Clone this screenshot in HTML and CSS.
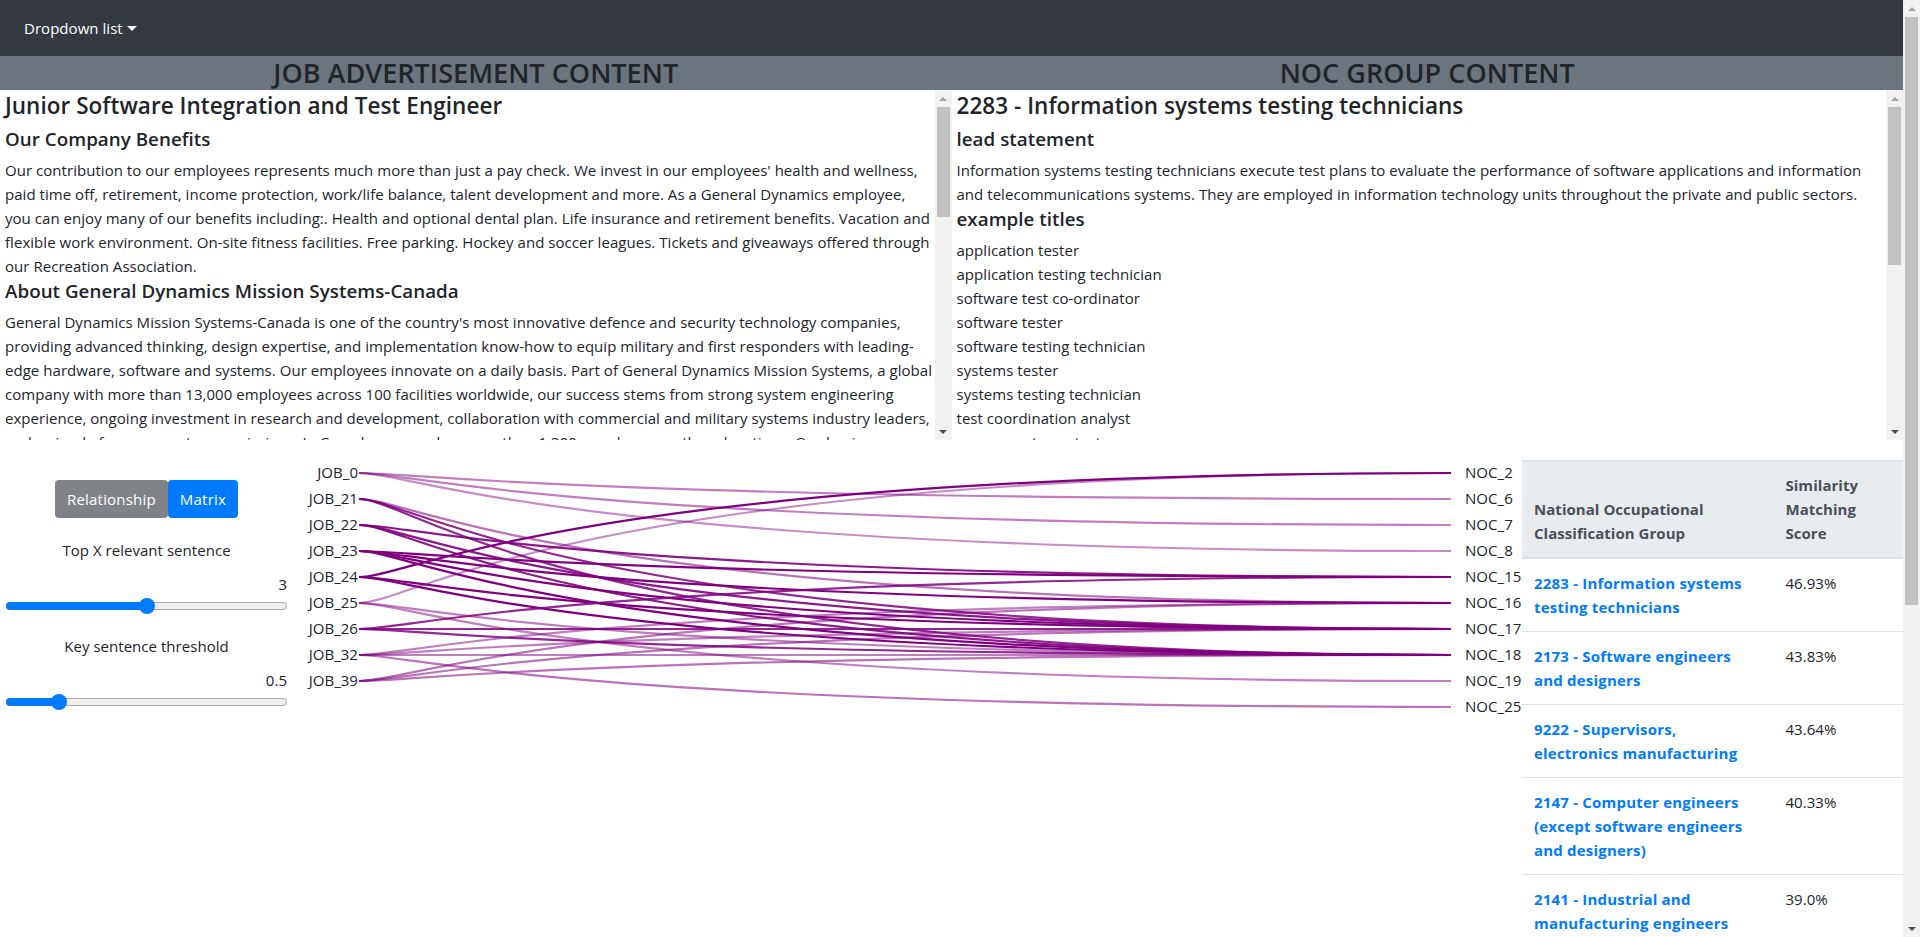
FILE: index.html
```html
<!DOCTYPE html>
<html lang="en">
<head>
<meta charset="UTF-8" />
<title>Job advertisement matching</title>
<link rel="stylesheet" href="styles.css">
</head>
<body>

<div class="page">
  <nav class="navbar">
    <a class="nav-link">Dropdown list<span class="caret"></span></a>
  </nav>

  <div class="heading-row">
    <h3>JOB ADVERTISEMENT CONTENT</h3>
    <h3>NOC GROUP CONTENT</h3>
  </div>

  <div class="panels">
    <div class="panel">
      <div class="panel-body">
        <h4>Junior Software Integration and Test Engineer</h4>
        <h5>Our Company Benefits</h5>
        <p>Our contribution to our employees represents much more than just a pay check. We invest in our employees' health and wellness, paid time off, retirement, income protection, work/life balance, talent development and more. As a General Dynamics employee, you can enjoy many of our benefits including:. Health and optional dental plan. Life insurance and retirement benefits. Vacation and flexible work environment. On-site fitness facilities. Free parking. Hockey and soccer leagues. Tickets and giveaways offered through our Recreation Association.</p>
        <h5>About General Dynamics Mission Systems-Canada</h5>
        <p>General Dynamics Mission Systems-Canada is one of the country's most innovative defence and security technology companies, providing advanced thinking, design expertise, and implementation know-how to equip military and first responders with leading-edge hardware, software and systems. Our employees innovate on a daily basis. Part of General Dynamics Mission Systems, a global company with more than 13,000 employees across 100 facilities worldwide, our success stems from strong system engineering experience, ongoing investment in research and development, collaboration with commercial and military systems industry leaders, and a simple focus on customer missions. In Canada, we employ more than 1,300 people across three locations. Our business</p>
      </div>
      <div class="scrollbar">
        <div class="arrow"><span class="tri-up"></span></div>
        <div class="thumb thumb-job"></div>
        <div class="arrow arrow-down"><span class="tri-down"></span></div>
      </div>
    </div>
    <div class="panel">
      <div class="panel-body">
        <h4>2283 - Information systems testing technicians</h4>
        <h5>lead statement</h5>
        <p>Information systems testing technicians execute test plans to evaluate the performance of software applications and information and telecommunications systems. They are employed in information technology units throughout the private and public sectors.</p>
        <h5>example titles</h5>
        <p>application tester</p>
        <p>application testing technician</p>
        <p>software test co-ordinator</p>
        <p>software tester</p>
        <p>software testing technician</p>
        <p>systems tester</p>
        <p>systems testing technician</p>
        <p>test coordination analyst</p>
        <p>user acceptance tester</p>
      </div>
      <div class="scrollbar">
        <div class="arrow"><span class="tri-up"></span></div>
        <div class="thumb thumb-noc"></div>
        <div class="arrow arrow-down"><span class="tri-down"></span></div>
      </div>
    </div>
  </div>

  <div class="main">
    <div class="controls">
      <div class="btn-row">
        <button class="btn btn-gray">Relationship</button>
        <button class="btn btn-blue">Matrix</button>
      </div>

      <div class="ctl-label">Top X relevant sentence</div>
      <div class="ctl-value">3</div>
      <div class="slider">
        <div class="slider-fill" style="width:50%"></div>
        <div class="slider-handle" style="left:50%"></div>
      </div>

      <div class="ctl-label ctl-gap">Key sentence threshold</div>
      <div class="ctl-value">0.5</div>
      <div class="slider">
        <div class="slider-fill" style="width:18.5%"></div>
        <div class="slider-handle" style="left:18.5%"></div>
      </div>
    </div>

    <svg id="sankey" class="sankey" width="1229" height="300">
      <g id="links"></g>
      <g class="job-labels">
        <text x="65" y="32">JOB_0</text>
        <text x="65" y="58">JOB_21</text>
        <text x="65" y="84">JOB_22</text>
        <text x="65" y="110">JOB_23</text>
        <text x="65" y="136">JOB_24</text>
        <text x="65" y="162">JOB_25</text>
        <text x="65" y="188">JOB_26</text>
        <text x="65" y="214">JOB_32</text>
        <text x="65" y="240">JOB_39</text>
      </g>
      <g class="noc-labels">
        <text x="1172" y="32">NOC_2</text>
        <text x="1172" y="58">NOC_6</text>
        <text x="1172" y="84">NOC_7</text>
        <text x="1172" y="110">NOC_8</text>
        <text x="1172" y="136">NOC_15</text>
        <text x="1172" y="162">NOC_16</text>
        <text x="1172" y="188">NOC_17</text>
        <text x="1172" y="214">NOC_18</text>
        <text x="1172" y="240">NOC_19</text>
        <text x="1172" y="266">NOC_25</text>
      </g>
    </svg>

    <div class="results">
      <table>
        <thead>
          <tr>
            <th class="col-group">National Occupational Classification Group</th>
            <th>Similarity Matching Score</th>
          </tr>
        </thead>
        <tbody>
          <tr><td><a>2283 - Information systems testing technicians</a></td><td>46.93%</td></tr>
          <tr><td><a>2173 - Software engineers and designers</a></td><td>43.83%</td></tr>
          <tr><td><a>9222 - Supervisors, electronics manufacturing</a></td><td>43.64%</td></tr>
          <tr><td><a>2147 - Computer engineers (except software engineers and designers)</a></td><td>40.33%</td></tr>
          <tr><td><a>2141 - Industrial and manufacturing engineers</a></td><td>39.0%</td></tr>
        </tbody>
      </table>
    </div>
  </div>
</div>

<div class="scrollbar">
  <div class="arrow"><span class="tri-up"></span></div>
  <div class="thumb thumb-page"></div>
  <div class="arrow arrow-down"><span class="tri-down"></span></div>
</div>

<script>
  // job row -> [noc row, opacity]
  const jobs = [
    { row: 0, to: [[1, 0.5], [2, 0.5], [3, 0.45]] },
    { row: 1, to: [[5, 0.55], [6, 0.85], [7, 0.85]] },
    { row: 2, to: [[4, 0.9], [6, 0.9], [7, 0.9]] },
    { row: 3, to: [[4, 1], [5, 1], [6, 1], [7, 1]] },
    { row: 4, to: [[0, 1], [6, 1], [7, 1]] },
    { row: 5, to: [[0, 0.45], [7, 0.5], [8, 0.5]] },
    { row: 6, to: [[4, 0.85], [6, 0.85], [7, 0.85]] },
    { row: 7, to: [[5, 0.5], [6, 0.5], [7, 0.5], [9, 0.55]] },
    { row: 8, to: [[5, 0.55], [6, 0.55], [7, 0.55]] }
  ];

  const links = document.getElementById('links');
  const x0 = 66, x1 = 1158;
  const w = x1 - x0;

  jobs.forEach(job => {
    job.to.forEach(([noc, op]) => {
      const y0 = 33 + job.row * 26;
      const y1 = 33 + noc * 26;
      const path = document.createElementNS('http://www.w3.org/2000/svg', 'path');
      path.setAttribute('d', `M${x0} ${y0} C${x0 + w * 0.05} ${y0} ${x0 + w * 0.2} ${y1} ${x1} ${y1}`);
      path.setAttribute('stroke-opacity', op);
      links.appendChild(path);
    });
  });
</script>

</body>
</html>
```

FILE: styles.css
```css
body {
  font-family: "Open Sans", Arial, sans-serif;
  font-size: 15px;
  line-height: 24px;
  letter-spacing: 0.04px;
  color: #212529;
  background: #fff;
  margin: 0;
  height: 937px;
  overflow: hidden;
  display: flex;
}
.page {
  flex: 1;
  min-width: 0;
}

.scrollbar {
  flex: none;
  width: 17px;
  background: #f1f1f1;
  display: flex;
  flex-direction: column;
}
.arrow {
  flex: none;
  height: 17px;
  display: flex;
  align-items: center;
  justify-content: center;
}
.arrow-down {
  margin-top: auto;
}
.tri-up {
  border-bottom: 4px solid #a3a3a3;
  border-left: 4px solid transparent;
  border-right: 4px solid transparent;
}
.tri-down {
  border-top: 4px solid #505050;
  border-left: 4px solid transparent;
  border-right: 4px solid transparent;
}
.thumb {
  flex: none;
  margin: 0 2px;
  background: #c1c1c1;
}
.thumb-page {
  height: 588px;
}
.thumb-job {
  height: 110px;
}
.thumb-noc {
  height: 158px;
}

.navbar {
  background: #343a40;
  height: 56px;
  padding: 8px 24px;
  box-sizing: border-box;
  display: flex;
  align-items: center;
}
.nav-link {
  color: #fff;
}
.caret {
  display: inline-block;
  margin-left: 4px;
  vertical-align: 3px;
  border-top: 5px solid;
  border-left: 5px solid transparent;
  border-right: 5px solid transparent;
}

.heading-row {
  display: grid;
  grid-template-columns: 1fr 1fr;
  background: #6c757d;
  height: 34px;
}
h3 {
  margin: 0;
  font-size: 27px;
  font-weight: 600;
  line-height: 34px;
  text-align: center;
}

.panels {
  display: grid;
  grid-template-columns: 1fr 1fr;
  height: 350px;
}
.panel {
  display: flex;
  min-width: 0;
  overflow: hidden;
}
.panel-body {
  flex: 1;
  min-width: 0;
  overflow: hidden;
  padding-left: 5px;
}
h4 {
  margin: 0 0 6px;
  padding-top: 2px;
  font-size: 22.5px;
  font-weight: 600;
  line-height: 28.8px;
}
h5 {
  margin: 1px 0 7px;
  font-size: 18.75px;
  font-weight: 600;
  line-height: 24px;
}
p {
  margin: 0;
}

.main {
  display: flex;
}
.controls {
  width: 293px;
  padding: 40px 6px 0;
  box-sizing: border-box;
  flex: none;
}
.btn-row {
  display: flex;
  justify-content: center;
  margin-bottom: 20px;
}
.btn {
  font: inherit;
  letter-spacing: 0.2px;
  color: #fff;
  height: 38px;
  padding: 0 12px;
  border: none;
  border-radius: 4px;
}
.btn-gray {
  background: #7f8286;
}
.btn-blue {
  background: #007bff;
}
.ctl-label {
  text-align: center;
}
.ctl-gap {
  margin-top: 24px;
}
.ctl-value {
  text-align: right;
  margin-top: 10px;
  margin-bottom: 6px;
}
.slider {
  position: relative;
  height: 8px;
  background: #eee;
  border: 1px solid #aaa;
  box-sizing: border-box;
  border-radius: 4px;
}
.slider-fill {
  position: absolute;
  left: -1px;
  top: -1px;
  height: 8px;
  background: #007bff;
  border-radius: 4px;
}
.slider-handle {
  position: absolute;
  top: -5px;
  width: 16px;
  height: 16px;
  margin-left: -8px;
  background: #007bff;
  border-radius: 50%;
}

.sankey {
  flex: none;
  display: block;
}
.sankey path {
  fill: none;
  stroke: #800080;
  stroke-width: 2.2;
}
.sankey text {
  dominant-baseline: central;
  fill: #212529;
}
.job-labels text {
  text-anchor: end;
}

.results {
  flex: 1;
  min-width: 0;
  margin-top: 20px;
}
table {
  width: 100%;
  table-layout: fixed;
  border-collapse: collapse;
}
th, td {
  padding: 12px;
  text-align: left;
  vertical-align: top;
}
th {
  background: #e9ecef;
  color: #495057;
  font-weight: 700;
  vertical-align: bottom;
  border-top: 1px solid #dee2e6;
  border-bottom: 2px solid #dee2e6;
}
td {
  border-bottom: 1px solid #dee2e6;
}
.col-group {
  box-sizing: border-box;
  width: 66%;
}
td a {
  color: #007bff;
  font-weight: 700;
  letter-spacing: 0.2px;
}
```
